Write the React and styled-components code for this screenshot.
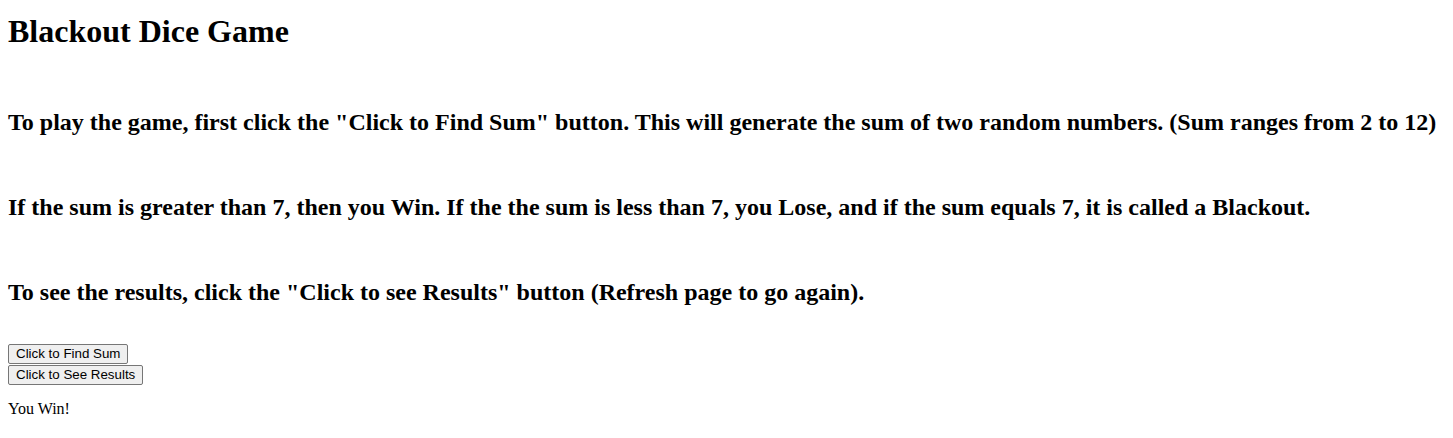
import React from 'react';
import styled, {createGlobalStyle} from "styled-components";

const GlobalStyle = createGlobalStyle`
    body {
        margin: 0px;
        font-family: "Liberation Serif", "Times New Roman", serif;
        font-size: 16px;
        color: #000;
        background: #fff;
    }
`

const App = () => {
    const rules = [
        'To play the game, first click the "Click to Find Sum" button. This will generate the sum of two random numbers. (Sum ranges from 2 to 12)',
        'If the sum is greater than 7, then you Win. If the the sum is less than 7, you Lose, and if the sum equals 7, it is called a Blackout.',
        'To see the results, click the "Click to see Results" button (Refresh page to go again).',
    ]
    return (
        <Page>
            <GlobalStyle />
            <Title>Blackout Dice Game</Title>
            <Rules>
            {
                rules.map((rule, index) => {
                    return <Rule key={index}>{rule}</Rule>
                })
            }
            </Rules>
            <Buttons>
                <Button>Click to Find Sum</Button>
                <Button>Click to See Results</Button>
            </Buttons>
            <Result>You Win!</Result>
        </Page>
    )
}
export default App;

const Page = styled.div`
    display: flex;
    flex-direction: column;
    align-items: flex-start;
    padding: 13px 8px 8px 8px;
`
const Title = styled.h1`
    font-size: 32px;
    line-height: 37px;
    font-weight: bold;
    margin: 0px;
`
const Rules = styled.div`
    display: flex;
    flex-direction: column;
    gap: 57px;
    margin-top: 58px;
`
const Rule = styled.h2`
    font-size: 24px;
    line-height: 28px;
    font-weight: bold;
    margin: 0px;
`
const Buttons = styled.div`
    display: flex;
    flex-direction: column;
    align-items: flex-start;
    gap: 1px;
    margin-top: 38px;
`
const Button = styled.button`
    font-family: "Liberation Sans", Arial, sans-serif;
    font-size: 13.333px;
    line-height: 16px;
    height: 20px;
    color: #000;
    background: #efefef;
    border: 1px solid #767676;
    border-radius: 2px;
    padding: 1px 7px;
`
const Result = styled.p`
    font-size: 16px;
    line-height: 18px;
    margin: 15px 0px 0px 0px;
`
